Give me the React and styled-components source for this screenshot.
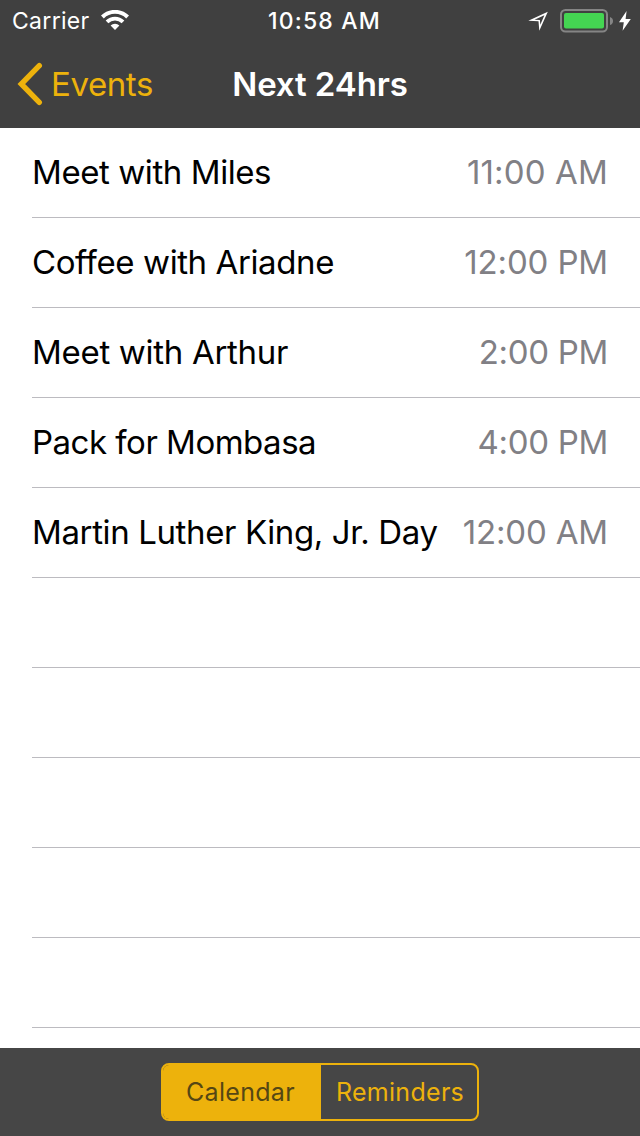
import { useState } from 'react';
import styled, { createGlobalStyle } from 'styled-components';

const GlobalStyle = createGlobalStyle`
  body {
    margin: 0;
    background: #fff;
    font-family: Inter, 'Liberation Sans', sans-serif;
  }

  * {
    box-sizing: border-box;
  }
`;

const Screen = styled.div`
  display: flex;
  flex-direction: column;
  width: 640px;
  height: 1136px;
  overflow: hidden;
`;

const Header = styled.header`
  flex: none;
  height: 128px;
  background: #404040;
  color: #fff;
`;

const StatusBar = styled.div`
  display: grid;
  grid-template-columns: 1fr auto 1fr;
  align-items: center;
  height: 40px;
  padding: 0 9px 0 12px;
`;

const StatusGroup = styled.div`
  display: flex;
  align-items: center;
  justify-content: ${p => (p.$end ? 'flex-end' : 'flex-start')};
  padding-top: ${p => (p.$end ? '2px' : 0)};
`;

const Carrier = styled.span`
  margin-right: 11px;
  padding-top: 2px;
  font-size: 23px;
  line-height: 38px;
  letter-spacing: 0.3px;
`;

const Clock = styled.span`
  padding: 2px 0 0 6px;
  font-size: 23px;
  line-height: 38px;
  font-weight: 500;
  letter-spacing: 1.2px;
`;

const NavBar = styled.nav`
  display: grid;
  grid-template-columns: 1fr auto 1fr;
  align-items: center;
  height: 88px;
  padding: 0 16px;
`;

const BackButton = styled.button`
  display: flex;
  align-items: center;
  gap: 7px;
  padding: 0;
  border: 0;
  background: none;
  color: #edb20c;
  font: 400 33px/42px Inter, 'Liberation Sans', sans-serif;
  letter-spacing: -0.4px;
`;

const Title = styled.h1`
  margin: 0;
  font-size: 33px;
  line-height: 42px;
  font-weight: 600;
  letter-spacing: -0.1px;
`;

const List = styled.ul`
  flex: 1;
  min-height: 0;
  margin: 0;
  padding: 0 0 0 32px;
  list-style: none;
  background: #fff;
`;

const Row = styled.li`
  display: flex;
  align-items: center;
  justify-content: space-between;
  height: 90px;
  padding: 0 32px 2px 0;
  border-bottom: 1px solid #bcbbc0;
  font-size: 33px;
  line-height: 42px;
  white-space: nowrap;
`;

const Name = styled.span`
  color: #000;
  letter-spacing: ${p => p.$tracking}px;
`;

const Time = styled.span`
  color: #818085;
  letter-spacing: ${p => p.$tracking}px;
`;

const Toolbar = styled.footer`
  display: flex;
  flex: none;
  align-items: center;
  justify-content: center;
  height: 88px;
  background: #464646;
`;

const Segments = styled.div`
  display: flex;
  width: 318px;
  height: 58px;
  border: 2px solid #edb20c;
  border-radius: 8px;
  overflow: hidden;
`;

const Segment = styled.button`
  flex: ${p => (p.$active ? '0 0 158px' : '1')};
  padding: 0 0 0 2px;
  border: 0;
  background: ${p => (p.$active ? '#edb20c' : 'transparent')};
  color: ${p => (p.$active ? '#554714' : '#edb20c')};
  font: 400 25px/54px Inter, 'Liberation Sans', sans-serif;
  letter-spacing: 0.3px;

  &:first-child {
    padding: 0 3px 0 0;
  }
`;

const events = [
  { name: 'Meet with Miles', time: '11:00 AM', tracking: -0.42, timeTracking: 0.15 },
  { name: 'Coffee with Ariadne', time: '12:00 PM', tracking: -0.4, timeTracking: -0.15 },
  { name: 'Meet with Arthur', time: '2:00 PM', tracking: -0.3, timeTracking: -0.3 },
  { name: 'Pack for Mombasa', time: '4:00 PM', tracking: -0.5, timeTracking: -0.3 },
  { name: 'Martin Luther King, Jr. Day', time: '12:00 AM', tracking: -0.38, timeTracking: -0.15 },
];

const emptyRows = [0, 1, 2, 3, 4];

function WifiIcon() {
  return (
    <svg width="28" height="20" viewBox="0 0 28 20" fill="none" stroke="#fff">
      <path d="M1.4 7a18 18 0 0 1 25.2 0" strokeWidth="4" />
      <path d="M6 11.9a11.4 11.4 0 0 1 16 0" strokeWidth="3.8" />
      <path d="M14 20l-4.4-4.4a6.2 6.2 0 0 1 8.8 0z" fill="#fff" stroke="none" />
    </svg>
  );
}

function LocationIcon() {
  return (
    <svg width="20" height="20" viewBox="0 0 20 20">
      <path
        fill="#fff"
        fillRule="evenodd"
        d="M19.8 0.8L0.3 9.7l10.2.6.8 9.4zM16.4 4.3l-4.1 9.5-.4-4.9-5.4-.2z"
      />
    </svg>
  );
}

function BatteryIcon() {
  return (
    <svg width="54" height="24" viewBox="0 0 54 24">
      <rect x="1" y="1" width="46" height="21.5" rx="4.5" fill="none" stroke="#858585" strokeWidth="2" />
      <rect x="4" y="4" width="40" height="15.5" rx="2" fill="#44d552" />
      <path d="M50 8q3 1 3 4t-3 4z" fill="#858585" />
    </svg>
  );
}

function BoltIcon() {
  return (
    <svg width="12" height="20" viewBox="0 0 12 20" fill="#fff">
      <path d="M7.6 0L0 11.2h4.8L3.6 19.8 11.8 8H6.6z" />
    </svg>
  );
}

function BackIcon() {
  return (
    <svg width="28" height="44" viewBox="0 0 28 44" fill="none" stroke="currentColor" strokeWidth="5.4" strokeLinecap="round" strokeLinejoin="miter">
      <path d="M23.3 3.7L5.3 22l18 18.3" />
    </svg>
  );
}

const Icons = styled.div`
  display: flex;
  align-items: center;
  gap: ${p => p.$gap}px;
`;

export default function App() {
  const [tab, setTab] = useState('Calendar');

  return (
    <>
      <GlobalStyle />
      <Screen>
        <Header>
          <StatusBar>
            <StatusGroup>
              <Carrier>Carrier</Carrier>
              <WifiIcon />
            </StatusGroup>
            <Clock>10:58 AM</Clock>
            <StatusGroup $end>
              <Icons $gap={12}>
                <LocationIcon />
                <Icons $gap={5}>
                  <BatteryIcon />
                  <BoltIcon />
                </Icons>
              </Icons>
            </StatusGroup>
          </StatusBar>
          <NavBar>
            <BackButton>
              <BackIcon />
              Events
            </BackButton>
            <Title>Next 24hrs</Title>
          </NavBar>
        </Header>
        <List>
          {events.map(event => (
            <Row key={event.name}>
              <Name $tracking={event.tracking}>{event.name}</Name>
              <Time $tracking={event.timeTracking}>{event.time}</Time>
            </Row>
          ))}
          {emptyRows.map(row => (
            <Row key={row} />
          ))}
        </List>
        <Toolbar>
          <Segments>
            {['Calendar', 'Reminders'].map(label => (
              <Segment key={label} $active={tab === label} onClick={() => setTab(label)}>
                {label}
              </Segment>
            ))}
          </Segments>
        </Toolbar>
      </Screen>
    </>
  );
}
